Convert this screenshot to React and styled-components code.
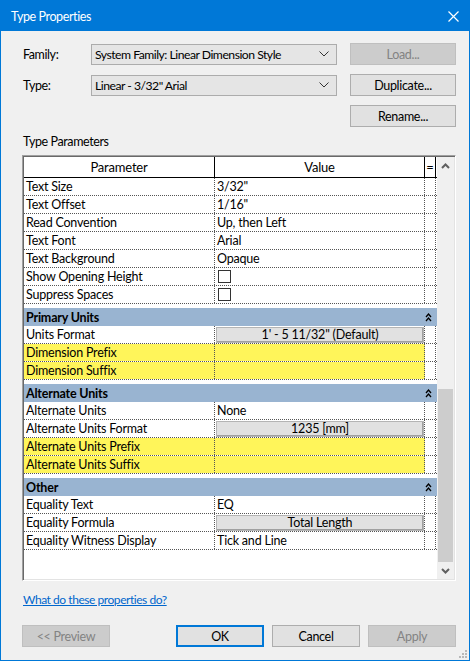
import React from 'react';
import styled, { createGlobalStyle, css } from 'styled-components';

const GlobalStyle = createGlobalStyle`
  html, body {
    margin: 0;
    padding: 0;
    background: #ffffff;
  }
  body {
    font-family: Lato, "Noto Sans", "Liberation Sans", sans-serif;
    font-size: 12px;
    letter-spacing: -0.4px;
    color: #000000;
  }
  * {
    box-sizing: border-box;
  }
`;

const Window = styled.div`
  position: relative;
  width: 470px;
  height: 661px;
  border: 1px solid #0078d7;
  background: #f0f0f0;
  display: flex;
  flex-direction: column;
`;

const TitleBar = styled.div`
  height: 30px;
  flex: none;
  background: #0078d7;
  color: #ffffff;
  display: flex;
  align-items: center;
  justify-content: space-between;
  padding: 0 10px 0 10px;
  font-size: 12.5px;
  letter-spacing: -0.4px;
`;

const Body = styled.div`
  flex: 1;
  display: flex;
  flex-direction: column;
  padding: 12px 13px 13px 21px;
`;

const TopGrid = styled.div`
  display: grid;
  grid-template-columns: 69px 246px 1fr;
  grid-template-rows: repeat(3, 22px);
  row-gap: 9px;
  align-items: center;
`;

const Label = styled.div`
  padding-left: 1px;
  font-size: 12.5px;
`;

const Combo = styled.div`
  height: 21px;
  border: 1px solid #acacac;
  background: #e5e5e5;
  display: flex;
  align-items: center;
  justify-content: space-between;
  padding: 0 7px 0 3px;
  font-size: 12.2px;
  letter-spacing: -0.5px;
`;

const Button = styled.button`
  height: 22px;
  width: ${p => p.$width || '106px'};
  justify-self: end;
  font-family: inherit;
  font-size: 12.5px;
  letter-spacing: -0.3px;
  padding: 0;
  background: ${p => (p.disabled ? '#cccccc' : '#e1e1e1')};
  color: ${p => (p.disabled ? '#838383' : '#000000')};
  border: 1px solid ${p => (p.disabled ? '#bfbfbf' : '#adadad')};
  ${p => p.$default && css`
    border: 2px solid #0078d7;
  `}
`;

const SectionLabel = styled.div`
  margin-top: 7px;
  line-height: 16px;
  padding-left: 1px;
  font-size: 12.5px;
`;

const Frame = styled.div`
  margin-top: 5px;
  flex: 1;
  display: flex;
  border: 1px solid;
  border-color: #a0a0a0 #ffffff #ffffff #a0a0a0;
  box-shadow: inset 1px 1px 0 #696969, inset -1px -1px 0 #e3e3e3;
  padding: 1px;
  min-height: 0;
`;

const Grid = styled.div`
  width: 413px;
  background: #ffffff;
  display: flex;
  flex-direction: column;
  letter-spacing: -0.2px;
`;

const RowBase = styled.div`
  display: grid;
  grid-template-columns: 191px 210px 11px 1fr;
`;

const HeadRow = styled(RowBase)`
  height: 21px;
  border-bottom: 1px solid #000000;
`;

const HeadCell = styled.div`
  border-right: ${p => (p.$last ? 'none' : '1px solid #000000')};
  display: flex;
  align-items: center;
  justify-content: center;
  font-size: 13px;
`;

const Row = styled(RowBase)`
  height: 18px;
  border-bottom: 1px dotted #555555;
`;

const Cell = styled.div`
  border-right: ${p => (p.$last ? 'none' : '1px dotted #555555')};
  background: ${p => (p.$yellow ? '#fff55a' : '#ffffff')};
  display: flex;
  align-items: center;
  padding-left: 2px;
  font-size: 12.5px;
  white-space: nowrap;
  overflow: hidden;
`;

const ValueButton = styled.div`
  width: 208px;
  height: 16px;
  margin-left: -1px;
  background: #e1e1e1;
  border: 1px solid #b4b4b4;
  box-shadow: inset -1px -1px 0 #a0a0a0;
  display: flex;
  align-items: center;
  justify-content: center;
`;

const CheckBox = styled.div`
  width: 13px;
  height: 13px;
  margin-left: 1px;
  border: 1px solid #333333;
  background: #ffffff;
`;

const Band = styled.div`
  margin-top: 4px;
  height: 18px;
  background: #99b4d1;
  display: flex;
  align-items: center;
  justify-content: space-between;
  padding: 0 5px 0 2px;
  font-weight: 700;
  font-size: 12.5px;
`;

const Scrollbar = styled.div`
  width: 17px;
  background: #f0f0f0;
  display: flex;
  flex-direction: column;
`;

const ArrowButton = styled.div`
  height: 17px;
  display: flex;
  align-items: center;
  justify-content: center;
`;

const Track = styled.div`
  flex: 1;
  display: flex;
  flex-direction: column;
  justify-content: flex-end;
  align-items: center;
`;

const Thumb = styled.div`
  width: 15px;
  height: 173px;
  background: #cdcdcd;
`;

const Link = styled.a`
  margin-top: 11px;
  line-height: 16px;
  color: #0066cc;
  text-decoration: underline;
  align-self: flex-start;
  padding-left: 1px;
  font-size: 12px;
  letter-spacing: -0.45px;
`;

const ButtonRow = styled.div`
  margin-top: 17px;
  display: flex;
  justify-content: space-between;
`;

const ButtonGroup = styled.div`
  display: flex;
  gap: 8px;
`;

const Grip = styled.svg`
  position: absolute;
  right: 2px;
  bottom: 2px;
`;

const ComboArrow = () => (
  <svg width="10" height="6" viewBox="0 0 10 6">
    <polyline points="0.5,0.5 5,5 9.5,0.5" fill="none" stroke="#333" strokeWidth="1" />
  </svg>
);

const ScrollArrow = ({ down }) => (
  <svg width="9" height="6" viewBox="0 0 9 6" style={down ? { transform: 'rotate(180deg)' } : undefined}>
    <polyline points="1,5 4.5,1.5 8,5" fill="none" stroke="#606060" strokeWidth="2" />
  </svg>
);

const Collapse = () => (
  <svg width="7" height="9" viewBox="0 0 7 9">
    <polyline points="1,4 3.5,1 6,4" fill="none" stroke="#000" strokeWidth="1.3" />
    <polyline points="1,8 3.5,5 6,8" fill="none" stroke="#000" strokeWidth="1.3" />
  </svg>
);

const rows = [
  { name: 'Text Size', value: '3/32"' },
  { name: 'Text Offset', value: '1/16"' },
  { name: 'Read Convention', value: 'Up, then Left' },
  { name: 'Text Font', value: 'Arial' },
  { name: 'Text Background', value: 'Opaque' },
  { name: 'Show Opening Height', check: true },
  { name: 'Suppress Spaces', check: true },
  { section: 'Primary Units' },
  { name: 'Units Format', button: '1\' - 5 11/32" (Default)' },
  { name: 'Dimension Prefix', yellow: true },
  { name: 'Dimension Suffix', yellow: true },
  { section: 'Alternate Units' },
  { name: 'Alternate Units', value: 'None' },
  { name: 'Alternate Units Format', button: '1235 [mm]' },
  { name: 'Alternate Units Prefix', yellow: true },
  { name: 'Alternate Units Suffix', yellow: true },
  { section: 'Other' },
  { name: 'Equality Text', value: 'EQ' },
  { name: 'Equality Formula', button: 'Total Length' },
  { name: 'Equality Witness Display', value: 'Tick and Line' },
];

const ParamRow = ({ row }) => {
  if (row.section) {
    return (
      <Band>
        <span>{row.section}</span>
        <Collapse />
      </Band>
    );
  }
  let value = row.value;
  if (row.check) value = <CheckBox />;
  if (row.button) value = <ValueButton>{row.button}</ValueButton>;
  return (
    <Row>
      <Cell $yellow={row.yellow}>{row.name}</Cell>
      <Cell $yellow={row.yellow}>{value}</Cell>
      <Cell />
      <Cell $last />
    </Row>
  );
};

export default function App() {
  return (
    <>
      <GlobalStyle />
      <Window>
        <TitleBar>
          <span>Type Properties</span>
          <svg width="11" height="11" viewBox="0 0 11 11">
            <path d="M0.5 0.5 L10.5 10.5 M10.5 0.5 L0.5 10.5" stroke="#fff" strokeWidth="1.2" />
          </svg>
        </TitleBar>
        <Body>
          <TopGrid>
            <Label>Family:</Label>
            <Combo>
              <span>System Family: Linear Dimension Style</span>
              <ComboArrow />
            </Combo>
            <Button disabled>Load...</Button>
            <Label>Type:</Label>
            <Combo>
              <span>Linear - 3/32" Arial</span>
              <ComboArrow />
            </Combo>
            <Button>Duplicate...</Button>
            <span />
            <span />
            <Button>Rename...</Button>
          </TopGrid>
          <SectionLabel>Type Parameters</SectionLabel>
          <Frame>
            <Grid>
              <HeadRow>
                <HeadCell>Parameter</HeadCell>
                <HeadCell>Value</HeadCell>
                <HeadCell>=</HeadCell>
                <HeadCell $last />
              </HeadRow>
              {rows.map((r, i) => <ParamRow key={i} row={r} />)}
            </Grid>
            <Scrollbar>
              <ArrowButton><ScrollArrow /></ArrowButton>
              <Track><Thumb /></Track>
              <ArrowButton><ScrollArrow down /></ArrowButton>
            </Scrollbar>
          </Frame>
          <Link href="#">What do these properties do?</Link>
          <ButtonRow>
            <Button disabled $width="88px">&lt;&lt; Preview</Button>
            <ButtonGroup>
              <Button $default $width="88px">OK</Button>
              <Button $width="88px">Cancel</Button>
              <Button disabled $width="88px">Apply</Button>
            </ButtonGroup>
          </ButtonRow>
        </Body>
        <Grip width="8" height="8" viewBox="0 0 8 8">
          {[[6, 0], [6, 3], [3, 3], [6, 6], [3, 6], [0, 6]].map(([x, y], i) => (
            <rect key={i} x={x} y={y} width="2" height="2" fill="#b8b8b8" />
          ))}
        </Grip>
      </Window>
    </>
  );
}
